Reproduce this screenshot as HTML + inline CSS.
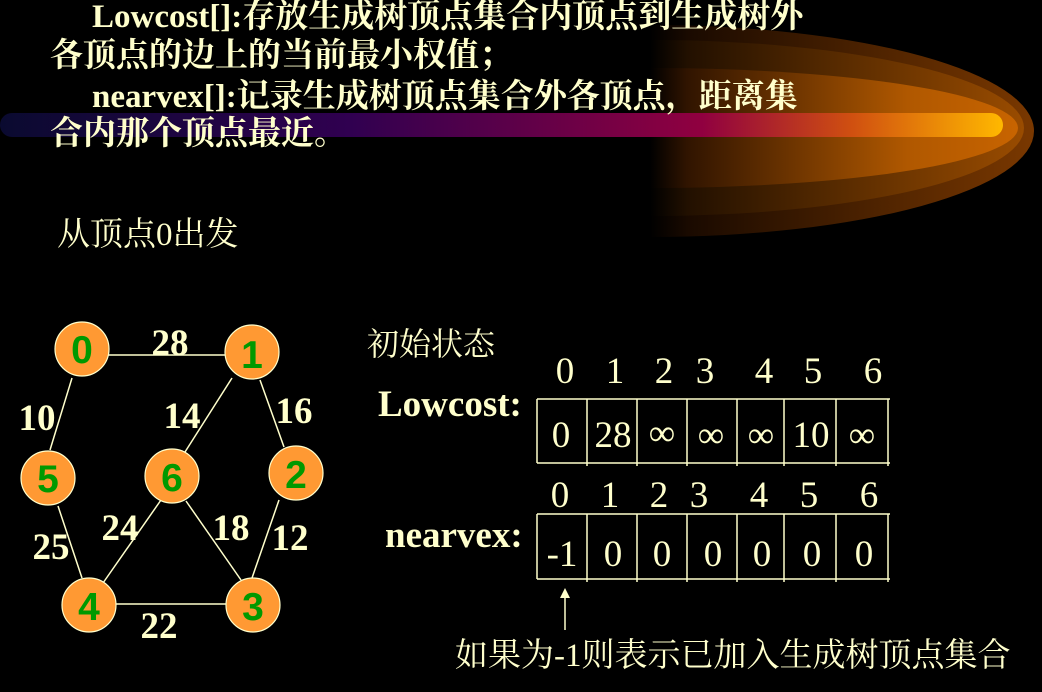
<!DOCTYPE html>
<html><head><meta charset="utf-8"><style>
html,body{margin:0;padding:0;background:#000;}
body{width:1042px;height:692px;overflow:hidden;position:relative;font-family:"Liberation Serif","Noto Serif CJK SC",serif;color:#ffffcc;}
.t{position:absolute;white-space:nowrap;line-height:1;}
.b{font-weight:bold;}
</style></head><body>
<svg width="1042" height="692" style="position:absolute;left:0;top:0">
<defs>
<linearGradient id="o1" x1="650" x2="1035" gradientUnits="userSpaceOnUse">
<stop offset="0" stop-color="#000"/><stop offset="0.1" stop-color="#1a0a00"/><stop offset="1" stop-color="#7a3800"/>
</linearGradient>
<linearGradient id="o2" x1="650" x2="1025" gradientUnits="userSpaceOnUse">
<stop offset="0" stop-color="#000"/><stop offset="0.1" stop-color="#221000"/><stop offset="1" stop-color="#9a4c00"/>
</linearGradient>
<linearGradient id="o3" x1="650" x2="1018" gradientUnits="userSpaceOnUse">
<stop offset="0" stop-color="#000"/><stop offset="0.1" stop-color="#301400"/><stop offset="0.7" stop-color="#b05800"/><stop offset="1" stop-color="#c86400"/>
</linearGradient>
<linearGradient id="bar" x1="0" x2="1">
<stop offset="0" stop-color="#0a0a30"/><stop offset="0.35" stop-color="#300050"/>
<stop offset="0.7" stop-color="#900040"/><stop offset="0.85" stop-color="#d05010"/><stop offset="1" stop-color="#ffb800"/>
</linearGradient>
<clipPath id="cr"><rect x="650" y="0" width="400" height="300"/></clipPath>
</defs>
<g clip-path="url(#cr)">
<ellipse cx="650" cy="131" rx="384" ry="106" fill="url(#o1)"/>
<ellipse cx="650" cy="128" rx="374" ry="88" fill="url(#o2)"/>
<ellipse cx="650" cy="128" rx="368" ry="60" fill="url(#o3)"/>
</g>
<rect x="0" y="113" width="1003" height="24" rx="12" fill="url(#bar)"/>
<g stroke="#ffffcc" stroke-width="1.5">
<line x1="82" y1="355" x2="252" y2="355"/>
<line x1="72" y1="378" x2="50" y2="450"/>
<line x1="232" y1="378" x2="185" y2="452"/>
<line x1="260" y1="380" x2="284" y2="447"/>
<line x1="58" y1="506" x2="82" y2="578"/>
<line x1="161" y1="500" x2="103" y2="583"/>
<line x1="186" y1="501" x2="241" y2="580"/>
<line x1="279" y1="500" x2="252" y2="578"/>
<line x1="89" y1="604" x2="253" y2="604"/>
</g>
<g fill="#ff9933" stroke="#ffffcc" stroke-width="1.2">
<circle cx="82" cy="349" r="27"/><circle cx="252" cy="352" r="27"/>
<circle cx="48" cy="478" r="27"/><circle cx="172" cy="476" r="27"/>
<circle cx="296" cy="473" r="27"/><circle cx="89" cy="605" r="27"/>
<circle cx="253" cy="605" r="27"/>
</g>
<g fill="#009900" font-family="Liberation Sans,sans-serif" font-weight="bold" font-size="39" text-anchor="middle">
<text x="82" y="363">0</text><text x="252" y="368">1</text>
<text x="48" y="492">5</text><text x="172" y="491">6</text>
<text x="296" y="488">2</text><text x="89" y="620">4</text>
<text x="253" y="620">3</text>
</g>
<g fill="#ffffcc" font-family="Liberation Serif,serif" font-weight="bold" font-size="37" text-anchor="middle">
<text x="170" y="355">28</text><text x="37" y="430">10</text>
<text x="182" y="428">14</text><text x="294" y="423">16</text>
<text x="120" y="540">24</text><text x="231" y="540">18</text>
<text x="290" y="550">12</text><text x="51" y="559">25</text>
<text x="159" y="638">22</text>
</g>
<g stroke="#ffffcc" stroke-width="1.5" fill="none">
<path d="M537 399H890M537 463H890M537 399V463M587 399V466M637 399V466M687 399V466M737 399V466M784 399V466M836 399V466M888 399V466"/>
<path d="M537 514H890M537 579H890M537 514V579M587 514V582M637 514V582M687 514V582M737 514V582M784 514V582M836 514V582M888 514V582"/>
<path d="M565 630V594"/>
</g>
<path d="M565 588L560 598H570Z" fill="#ffffcc"/>
<g fill="#ffffcc" font-family="Liberation Serif,serif" font-size="37" text-anchor="middle">
<text x="565" y="383">0</text><text x="615" y="383">1</text><text x="664" y="383">2</text><text x="705" y="383">3</text><text x="764" y="383">4</text><text x="813" y="383">5</text><text x="873" y="383">6</text>
<text x="561" y="447">0</text><text x="613" y="447">28</text><text x="662" y="445">∞</text><text x="711" y="447">∞</text><text x="761" y="447">∞</text><text x="811" y="447">10</text><text x="862" y="447">∞</text>
<text x="560" y="507">0</text><text x="610" y="507">1</text><text x="659" y="507">2</text><text x="699" y="507">3</text><text x="759" y="507">4</text><text x="809" y="507">5</text><text x="869" y="507">6</text>
<text x="562" y="566">-1</text><text x="613" y="566">0</text><text x="662" y="566">0</text><text x="713" y="566">0</text><text x="762" y="566">0</text><text x="812" y="566">0</text><text x="864" y="566">0</text>
</g>
</svg>
<div class="t b" style="left:92px;top:1px;font-size:33px;">Lowcost[]:存放生成树顶点集合内顶点到生成树外</div>
<div class="t b" style="left:50px;top:40px;font-size:33px;">各顶点的边上的当前最小权值；</div>
<div class="t b" style="left:92px;top:81px;font-size:33px;">nearvex[]:记录生成树顶点集合外各顶点，距离集</div>
<div class="t b" style="left:50px;top:118px;font-size:33px;">合内那个顶点最近。</div>
<div class="t" style="left:57px;top:219px;font-size:33px;">从顶点0出发</div>
<div class="t" style="left:367px;top:328px;font-size:32px;">初始状态</div>
<div class="t b" style="left:378px;top:386px;font-size:37px;">Lowcost:</div>
<div class="t b" style="left:385px;top:517px;font-size:37px;">nearvex:</div>
<div class="t" style="left:455px;top:640px;font-size:33px;">如果为-1则表示已加入生成树顶点集合</div>
</body></html>
